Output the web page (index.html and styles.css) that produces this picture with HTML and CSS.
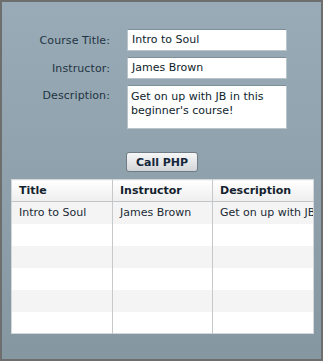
FILE: index.html
```html
<!DOCTYPE html>
<html>
<head>
<meta charset="utf-8">
<link rel="stylesheet" href="styles.css">
</head>
<body>
<div class="frame">
  <div class="form">
    <label class="lbl">Course Title:</label>
    <div class="field">Intro to Soul</div>
    <label class="lbl">Instructor:</label>
    <div class="field">James Brown</div>
    <label class="lbl lbl-top">Description:</label>
    <div class="field area">Get on up with JB in this beginner's course!</div>
  </div>
  <div class="btn-row"><button class="btn">Call PHP</button></div>
  <table class="grid">
    <colgroup><col class="c1"><col class="c2"><col class="c3"></colgroup>
    <thead>
      <tr><th>Title</th><th>Instructor</th><th>Description</th></tr>
    </thead>
    <tbody>
      <tr class="odd"><td>Intro to Soul</td><td>James Brown</td><td>Get on up with JB in this beginner's course!</td></tr>
      <tr><td></td><td></td><td></td></tr>
      <tr class="odd"><td></td><td></td><td></td></tr>
      <tr><td></td><td></td><td></td></tr>
      <tr class="odd"><td></td><td></td><td></td></tr>
      <tr><td></td><td></td><td></td></tr>
    </tbody>
  </table>
</div>
</body>
</html>
```
FILE: styles.css
```css
html, body {
  margin: 0;
  padding: 0;
}
body {
  font-family: "DejaVu Sans", Verdana, sans-serif;
  font-size: 11px;
}
.frame {
  width: 323px;
  height: 361px;
  box-sizing: border-box;
  border: 2px solid #6e6e6e;
  background: linear-gradient(#99abb6, #8597a1);
  padding-top: 27px;
}
.form {
  display: grid;
  grid-template-columns: 108px 160px;
  column-gap: 17px;
  row-gap: 6px;
  align-items: center;
}
.lbl {
  text-align: right;
  color: #1f3443;
  letter-spacing: 0.1px;
}
.lbl-top {
  align-self: start;
  padding-top: 4px;
}
.field {
  box-sizing: border-box;
  height: 22px;
  background: #fff;
  border: 1px solid #b9c3ca;
  border-top-color: #7f8f9a;
  color: #0e1e2c;
  padding: 3px 4px 0 4px;
  line-height: 14px;
}
.field.area {
  height: 44px;
  padding: 4px 3px 0 3px;
}
.btn-row {
  display: flex;
  justify-content: center;
  padding-top: 23px;
  padding-left: 1px;
}
.btn {
  width: 72px;
  height: 20px;
  margin: 0;
  padding: 0;
  border: 1px solid #6f7c86;
  border-radius: 3px;
  background: linear-gradient(#f7f7f7, #d2d5d8);
  font-family: "DejaVu Sans", Verdana, sans-serif;
  font-size: 11px;
  font-weight: bold;
  color: #15263a;
}
.grid {
  margin: 7px 0 0 9px;
  width: 302px;
  table-layout: fixed;
  border-collapse: collapse;
  border: 1px solid #d3d7da;
  background: #fff;
}
.c1 { width: 101px; }
.c2 { width: 100px; }
.c3 { width: 101px; }
.grid th, .grid td {
  height: 22px;
  box-sizing: border-box;
  padding: 0 0 0 7px;
  text-align: left;
  white-space: nowrap;
  overflow: hidden;
  border-left: 1px solid #c6c9cc;
  color: #1a2a36;
}
.grid th:first-child, .grid td:first-child {
  border-left: none;
}
.grid th {
  font-weight: bold;
  background: linear-gradient(#ffffff, #eeeeee);
  border-bottom: 1px solid #c3c6c9;
  color: #14222e;
}
.grid tr.odd td {
  background: #f4f4f4;
}
```
